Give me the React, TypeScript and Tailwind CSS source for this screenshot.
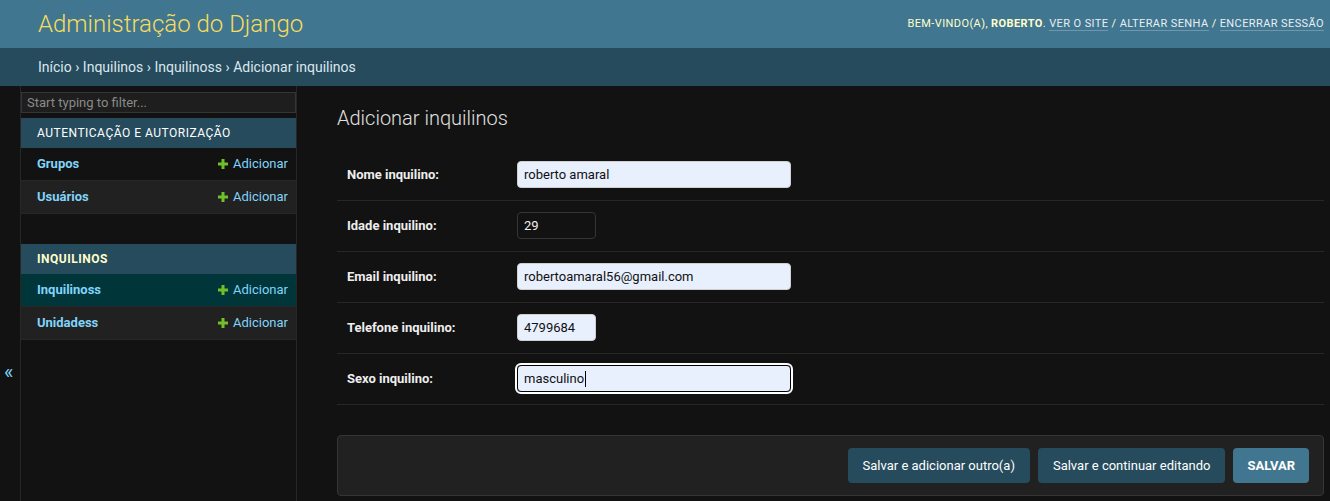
import React from "react";

function Plus() {
  return (
    <svg width="10" height="10" viewBox="0 0 10 10" className="shrink-0">
      <rect x="3.5" y="0" width="3" height="10" fill="#70bf2b" />
      <rect x="0" y="3.5" width="10" height="3" fill="#70bf2b" />
    </svg>
  );
}

function NavRow({ name, bg }: { name: string; bg: string }) {
  return (
    <div className={`flex h-[33px] items-center justify-between border-b border-[#272727] pl-[16px] pr-[8px] text-[13px] ${bg}`}>
      <span className="font-bold text-[#81d4fa]">{name}</span>
      <span className="flex items-center gap-[5px] text-[#81d4fa]">
        <Plus />
        Adicionar
      </span>
    </div>
  );
}

function FormRow({ label, value, wide, dark, focus }: { label: string; value: string; wide?: boolean; dark?: boolean; focus?: boolean }) {
  return (
    <div className="flex items-center border-b border-[#272727] pl-[10px] pt-[11px] pb-[12px]">
      <div className="w-[170px] text-[13px] font-bold text-[#eeeeee]">{label}</div>
      <div
        className={`flex h-[27px] items-center rounded-[4px] px-[6px] text-[13px] ${wide ? "w-[274px]" : "w-[79px]"} ${
          dark ? "border border-[#353535] bg-[#121212] text-[#eeeeee]" : "border border-[#cfcfcf] bg-[#e8f0fe] text-[#111]"
        } ${focus ? "border-black outline-2 outline-white" : ""}`}
      >
        {value}
        {focus && <span className="ml-[1px] inline-block h-[16px] w-px bg-black" />}
      </div>
    </div>
  );
}

export default function App() {
  return (
    <div className="flex h-[501px] flex-col overflow-hidden bg-[#121212] font-[family-name:Roboto,sans-serif]">
      <div className="flex h-[48px] shrink-0 items-center justify-between bg-[#417690] pl-[38px] pr-[6px]">
        <div className="text-[24px] font-light text-[#f5dd5d]">Administração do Django</div>
        <div className="text-[11px] uppercase tracking-[0.4px] text-[#ffffcc]">
          Bem-vindo(a), <strong className="font-bold">Roberto</strong>.{" "}
          <span className="border-b border-[rgba(255,255,255,0.25)] text-[#e8eef2]">Ver o site</span> /{" "}
          <span className="border-b border-[rgba(255,255,255,0.25)] text-[#e8eef2]">Alterar senha</span> /{" "}
          <span className="border-b border-[rgba(255,255,255,0.25)] text-[#e8eef2]">Encerrar sessão</span>
        </div>
      </div>
      <div className="flex h-[38px] shrink-0 items-center bg-[#264b5d] pl-[38px] text-[14px] text-[#dbe7ee]">
        Início › Inquilinos › Inquilinoss › Adicionar inquilinos
      </div>
      <div className="flex flex-1">
        <div className="w-[21px] shrink-0 border-r border-[#272727] pt-[276px] pl-[4px] text-[20px] leading-[20px] text-[#81d4fa]">«</div>
        <div className="w-[276px] shrink-0 border-r border-[#272727]">
          <div className="mt-[6px] flex h-[21px] items-center border border-[#353535] bg-[#1e1e1e] pl-[5px] text-[13px] text-[#8a8a8a]">
            Start typing to filter...
          </div>
          <div className="mt-[5px] mb-[30px]">
            <div className="flex h-[30px] items-center bg-[#264b5d] pl-[16px] text-[12px] uppercase tracking-[0.5px] text-white">
              Autenticação e Autorização
            </div>
            <NavRow name="Grupos" bg="bg-[#121212]" />
            <NavRow name="Usuários" bg="bg-[#212121]" />
          </div>
          <div>
            <div className="flex h-[30px] items-center bg-[#264b5d] pl-[16px] text-[12px] font-bold uppercase tracking-[0.5px] text-[#ffffcc]">
              Inquilinos
            </div>
            <NavRow name="Inquilinoss" bg="bg-[#00363a]" />
            <NavRow name="Unidadess" bg="bg-[#212121]" />
          </div>
        </div>
        <div className="flex-1 pl-[40px] pr-[6px] pt-[20px]">
          <h1 className="mb-[20px] text-[20px] font-light leading-[24px] text-[#e0e0e0]">Adicionar inquilinos</h1>
          <div>
            <FormRow label="Nome inquilino:" value="roberto amaral" wide />
            <FormRow label="Idade inquilino:" value="29" dark />
            <FormRow label="Email inquilino:" value="robertoamaral56@gmail.com" wide />
            <FormRow label="Telefone inquilino:" value="4799684" />
            <FormRow label="Sexo inquilino:" value="masculino" wide focus />
          </div>
          <div className="mt-[30px] flex justify-end gap-[8px] rounded-[4px] border border-[#353535] bg-[#212121] px-[14px] py-[12px]">
            <div className="flex h-[35px] items-center rounded-[4px] bg-[#264b5d] px-[15px] text-[13px] text-white">Salvar e adicionar outro(a)</div>
            <div className="flex h-[35px] items-center rounded-[4px] bg-[#264b5d] px-[15px] text-[13px] text-white">Salvar e continuar editando</div>
            <div className="flex h-[35px] items-center rounded-[4px] bg-[#417690] px-[14px] text-[13px] font-bold text-white">SALVAR</div>
          </div>
        </div>
      </div>
    </div>
  );
}
